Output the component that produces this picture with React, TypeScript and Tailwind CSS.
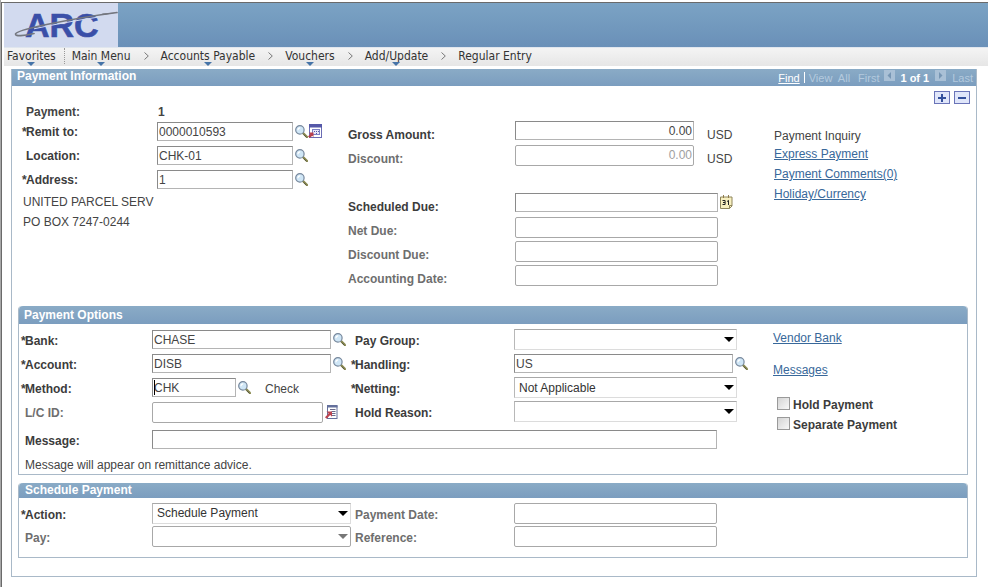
import type { ReactNode } from "react";

function Lens() {
  return (
    <svg width="13" height="13" viewBox="0 0 13 13" aria-hidden="true">
      <path d="M8 8L12 12" stroke="#8a8a50" strokeWidth="2.4" strokeLinecap="round" />
      <path d="M8.6 9.4L11.4 12.4" stroke="#4a4a3c" strokeWidth="0.8" />
      <circle cx="4.9" cy="4.9" r="4.2" fill="#cfe6f6" stroke="#76879c" strokeWidth="1.2" />
      <path d="M3 5.2A2.2 2.2 0 0 1 5.2 2.8" stroke="#fff" strokeWidth="1.2" fill="none" />
    </svg>
  );
}

function LookupButton({ label }: { label: string }) {
  return (
    <button type="button" aria-label={label} className="mb-0.5 ml-0.5 shrink-0">
      <Lens />
    </button>
  );
}

function DetailIcon() {
  return (
    <svg width="15" height="14" viewBox="0 0 15 14" aria-hidden="true">
      <rect x="1.500" y="0.5" width="12" height="13" fill="#fff" stroke="#6a6cb4" />
      <rect x="1" y="0" width="13" height="3.5" fill="#5558a8" />
      <rect x="4.5" y="5.5" width="7" height="5" fill="#e6e6f8" stroke="#7c80c4" />
      <path d="M6 7.5h1M8 7.5h1M10 7.5h1M8 9.5h1" stroke="#5558a8" />
      <path d="M1 8.5h4.500v4.500L4.200 11.700L1.800 14L0 12.400L2.300 9.900Z" fill="#b8404e" />
    </svg>
  );
}

function DocumentIcon() {
  return (
    <svg width="13" height="14" viewBox="0 0 13 14" aria-hidden="true">
      <rect x="2.5" y="0.5" width="9.5" height="13" fill="#fff" stroke="#64709c" />
      <path d="M2 1.5h10.5" stroke="#64709c" strokeWidth="2" />
      <path d="M5 4.5h5.5M6.5 6.5h4M7 8.5h3.5M7 10.5h3.5" stroke="#6c6c8c" />
      <path d="M1.5 6.5H7v5.3L5.2 10L1.6 13.8L0 12.3L3.6 8.5Z" fill="#bc4450" />
    </svg>
  );
}

function CalendarIcon() {
  return (
    <svg width="13" height="14" viewBox="0 0 13 14" aria-hidden="true">
      <path d="M0.5 2h11.5v9l-2.5 2.5h-9Z" fill="#f8f0c0" stroke="#8f865c" />
      <path d="M3.5 0v3M8.5 0v3" stroke="#8f7c4c" />
      <path d="M2.5 5.5h2.6v4H2.5M3 7.5h2M7 6.6L8.5 5.4V10" stroke="#222" fill="none" />
      <path d="M12 10.5H9.5v3" stroke="#8f865c" fill="none" />
    </svg>
  );
}

function Label({ id, required, muted, indent = true, className, children }: {
  id: string;
  required?: boolean;
  muted?: boolean;
  indent?: boolean;
  className: string;
  children: ReactNode;
}) {
  return (
    <label
      htmlFor={id}
      className={`flex shrink-0 font-bold leading-4 ${muted ? "text-[#6e6e6e]" : "text-[#3c3c3c]"} ${className}`}
    >
      {indent && <span className="w-1 shrink-0">{required ? "*" : ""}</span>}
      {children}
    </label>
  );
}

function TextField({ id, value = "", disabled, className }: {
  id: string;
  value?: string;
  disabled?: boolean;
  className: string;
}) {
  return (
    <input
      id={id}
      type="text"
      defaultValue={value}
      disabled={disabled}
      className={`shrink-0 border bg-white px-px text-[12px] leading-4 outline-none ${
        disabled
          ? "h-[21px] rounded-xs border-[#a8a8a8] text-[#a0a0a0]"
          : "mb-px h-[19px] border-[#b4b4b4] border-t-[#8a8a8a] border-l-[#8a8a8a] text-[#444]"
      } ${className}`}
    />
  );
}

function Dropdown({ id, value = "", disabled, className }: {
  id: string;
  value?: string;
  disabled?: boolean;
  className: string;
}) {
  return (
    <div className={`relative mb-px shrink-0 ${className}`}>
      <select
        id={id}
        disabled={disabled}
        className={`block h-[21px] w-full appearance-none border bg-white pl-1 text-[12px] leading-4 text-[#333] opacity-100 outline-none ${
          disabled ? "rounded-xs border-[#a8a8a8]" : "border-[#dcdcdc] border-t-[#a8a8a8] border-l-[#b8b8b8]"
        }`}
      >
        <option>{value}</option>
      </select>
      <svg
        width="10"
        height="5"
        viewBox="0 0 10 5"
        aria-hidden="true"
        className={`pointer-events-none absolute top-2 right-[3px] ${disabled ? "text-[#777]" : "text-black"}`}
      >
        <path d="M0 0h10L5 5Z" fill="currentColor" />
      </svg>
    </div>
  );
}

function Link({ children }: { children: ReactNode }) {
  return (
    <a href="#" className="text-[#38689a] underline">
      {children}
    </a>
  );
}

function Crumb({ children, menu = true }: { children: ReactNode; menu?: boolean }) {
  return (
    <a href="#" className="relative leading-4">
      {children}
      {menu && (
        <svg width="8" height="4" viewBox="0 0 8 4" aria-hidden="true" className="absolute top-[14px] left-1/2 -ml-1">
          <path d="M0 0h8L4 4Z" fill="#4674a8" />
        </svg>
      )}
    </a>
  );
}

function Chevron() {
  return (
    <svg width="5" height="8" viewBox="0 0 5 8" aria-hidden="true" className="mr-3 ml-[13px]">
      <path d="M0.5 0.5L4.3 4L0.5 7.5" fill="none" stroke="#777" />
    </svg>
  );
}

function Logo() {
  return (
    <svg width="114" height="44" viewBox="0 0 114 44" role="img" aria-label="ARC" className="block bg-[#d2daef]">
      <text
        x="21"
        y="34"
        fontFamily="Liberation Sans, Arial, sans-serif"
        fontWeight="700"
        fontSize="34"
        fill="#3a4fa8"
        stroke="#3a4fa8"
        strokeWidth="0.6"
      >
        ARC
      </text>
      <path d="M30 25.800C50 21.500 72 17.500 95 14" stroke="#d2daef" strokeWidth="1" fill="none" />
      <path
        d="M113 9.500C90 12.500 62 17.500 40 22C24 25.500 12 28.500 11.500 31C11 33.500 20 33 30 30.500"
        fill="none"
        stroke="#74777f"
        strokeWidth="1.7"
        strokeLinecap="round"
      />
      <path d="M98 10.500L113 9.500L100 12Z" fill="#74777f" />
    </svg>
  );
}

function PageArrow({ back }: { back?: boolean }) {
  return (
    <svg width="11" height="11" viewBox="0 0 11 11" aria-hidden="true">
      <rect width="11" height="11" fill="#a9c0d6" />
      <path d={back ? "M7 2v7L3.500 5.500Z" : "M4 2v7L7.500 5.500Z"} fill="#7796b4" />
    </svg>
  );
}

function RowButton({ minus }: { minus?: boolean }) {
  return (
    <button
      type="button"
      aria-label={minus ? "Delete row" : "Add row"}
      className="flex h-[13px] w-4 items-center justify-center border border-[#6a74b8] bg-[#e0e6fa]"
    >
      <svg width="8" height="8" viewBox="0 0 8 8" aria-hidden="true">
        <path d={minus ? "M0 4h8" : "M0 4h8M4 0v8"} stroke="#34509c" strokeWidth="2" />
      </svg>
    </button>
  );
}

function Check({ id, children }: { id: string; children: ReactNode }) {
  return (
    <div className="flex h-5 items-center">
      <input
        id={id}
        type="checkbox"
        className="mb-0.5 size-[13px] shrink-0 appearance-none border border-[#9a9a9a] bg-linear-to-br from-[#d4d4d4] to-[#f8f8f8]"
      />
      <label htmlFor={id} className="ml-[3px] pt-0.5 font-bold leading-4 text-[#3c3c3c]">
        {children}
      </label>
    </div>
  );
}

const BAR = "bg-linear-to-b from-[#8aabc6] to-[#7b9dbf] font-bold text-white";
const BOX = "border border-[#a9b9c8]";

function PaymentInformation() {
  return (
    <div className="flex">
      <div className="w-[336px] shrink-0 pl-[10px]">
        <div className="flex h-4 items-center font-bold">
          <span className="w-[136px] pl-1">Payment:</span>
          <span>1</span>
        </div>
        <div className="flex h-6 items-center">
          <Label id="remit" required className="w-[135px]">Remit to:</Label>
          <TextField id="remit" value="0000010593" className="w-[136px]" />
          <LookupButton label="Look up remit to" />
          <button type="button" aria-label="Remit details" className="mb-0.5">
            <DetailIcon />
          </button>
        </div>
        <div className="flex h-6 items-center">
          <Label id="location" className="w-[135px]">Location:</Label>
          <TextField id="location" value="CHK-01" className="w-[136px]" />
          <LookupButton label="Look up location" />
        </div>
        <div className="flex h-6 items-center">
          <Label id="address" required className="w-[135px]">Address:</Label>
          <TextField id="address" value="1" className="w-[136px]" />
          <LookupButton label="Look up address" />
        </div>
        <p className="pl-px leading-5">UNITED PARCEL SERV</p>
        <p className="pl-px leading-5">PO BOX 7247-0244</p>
      </div>

      <div className="w-[426px] shrink-0 pt-[15px]">
        <div className="flex h-6 items-center">
          <Label id="gross" indent={false} className="w-[167px] pt-2">Gross Amount:</Label>
          <TextField id="gross" value="0.00" className="w-[179px] text-right" />
          <span className="ml-[13px] pt-2 leading-4">USD</span>
        </div>
        <div className="flex h-6 items-center">
          <Label id="discount" muted indent={false} className="w-[167px] pt-2">Discount:</Label>
          <TextField id="discount" value="0.00" disabled className="w-[179px] text-right" />
          <span className="ml-[13px] pt-2 leading-4">USD</span>
        </div>
        <div className="mt-6 flex h-6 items-center">
          <Label id="scheduled" indent={false} className="w-[167px] pt-2">Scheduled Due:</Label>
          <TextField id="scheduled" className="w-[203px]" />
          <button type="button" aria-label="Choose a date" className="mb-0.5 ml-0.5">
            <CalendarIcon />
          </button>
        </div>
        <div className="flex h-6 items-center">
          <Label id="net" muted indent={false} className="w-[167px] pt-2">Net Due:</Label>
          <TextField id="net" disabled className="w-[203px]" />
        </div>
        <div className="flex h-6 items-center">
          <Label id="discount-due" muted indent={false} className="w-[167px] pt-2">Discount Due:</Label>
          <TextField id="discount-due" disabled className="w-[203px]" />
        </div>
        <div className="flex h-6 items-center">
          <Label id="accounting" muted indent={false} className="w-[167px] pt-2">Accounting Date:</Label>
          <TextField id="accounting" disabled className="w-[203px]" />
        </div>
      </div>

      <div className="flex flex-col items-start pt-6 leading-5">
        <span className="leading-4">Payment Inquiry</span>
        <Link>Express Payment</Link>
        <Link>Payment Comments(0)</Link>
        <Link>Holiday/Currency</Link>
      </div>
    </div>
  );
}

function PaymentOptions() {
  return (
    <section className={`mt-[19px] ${BOX} rounded-t-sm border-t-0`}>
      <h2 className={`h-[18px] rounded-t-sm pl-[5px] leading-[18px] ${BAR}`}>Payment Options</h2>
      <div className="flex pt-1">
        <div className="w-[754px] shrink-0 pl-0.5">
          <div className="flex">
            <div className="w-[330px] shrink-0">
              <div className="flex h-6 items-center">
                <Label id="bank" required className="w-[131px] pt-0.5">Bank:</Label>
                <TextField id="bank" value="CHASE" className="w-[179px]" />
                <LookupButton label="Look up bank" />
              </div>
              <div className="flex h-6 items-center">
                <Label id="account" required className="w-[131px] pt-0.5">Account:</Label>
                <TextField id="account" value="DISB" className="w-[179px]" />
                <LookupButton label="Look up account" />
              </div>
              <div className="flex h-6 items-center">
                <Label id="method" required className="w-[131px] pt-0.5">Method:</Label>
                <div className="relative flex">
                  <TextField id="method" value="CHK" className="w-[84px]" />
                  <span className="absolute top-0.5 left-0.5 h-[15px] w-px bg-black" />
                </div>
                <LookupButton label="Look up method" />
                <span className="ml-[14px] pt-0.5 leading-4">Check</span>
              </div>
              <div className="flex h-6 items-center">
                <Label id="lc" muted className="w-[131px] pt-0.5">L/C ID:</Label>
                <TextField id="lc" disabled className="w-[171px]" />
                <button type="button" aria-label="Letter of credit" className="ml-0.5">
                  <DocumentIcon />
                </button>
              </div>
            </div>
            <div>
              <div className="flex h-6 items-center">
                <Label id="group" className="w-[163px] pt-0.5">Pay Group:</Label>
                <Dropdown id="group" className="w-[223px]" />
              </div>
              <div className="flex h-6 items-center">
                <Label id="handling" required className="w-[163px] pt-0.5">Handling:</Label>
                <TextField id="handling" value="US" className="w-[219px]" />
                <LookupButton label="Look up handling" />
              </div>
              <div className="flex h-6 items-center">
                <Label id="netting" required className="w-[163px] pt-0.5">Netting:</Label>
                <Dropdown id="netting" value="Not Applicable" className="w-[223px]" />
              </div>
              <div className="flex h-6 items-center">
                <Label id="hold-reason" className="w-[163px] pt-0.5">Hold Reason:</Label>
                <Dropdown id="hold-reason" className="w-[223px]" />
              </div>
            </div>
          </div>
          <div className="mt-1 flex h-6 items-center">
            <Label id="message" className="w-[131px] pt-0.5">Message:</Label>
            <TextField id="message" className="w-[565px]" />
          </div>
          <p className="mt-1 pl-1 leading-[18px]">Message will appear on remittance advice.</p>
        </div>
        <div className="flex flex-col items-start leading-5">
          <Link>Vendor Bank</Link>
          <div className="mt-3">
            <Link>Messages</Link>
          </div>
          <div className="mt-[14px] pl-1">
            <Check id="hold">Hold Payment</Check>
            <Check id="separate">Separate Payment</Check>
          </div>
        </div>
      </div>
    </section>
  );
}

function SchedulePayment() {
  return (
    <section className={`mt-2 ${BOX} rounded-t-sm border-t-0`}>
      <h2 className={`h-[15px] rounded-t-sm pl-1.5 leading-[15px] ${BAR}`}>Schedule Payment</h2>
      <div className="flex pt-1 pb-[9px] pl-0.5">
        <div className="w-[330px] shrink-0">
          <div className="flex h-[23px] items-center">
            <Label id="action" required className="w-[131px] pt-0.5">Action:</Label>
            <Dropdown id="action" value="Schedule Payment" className="w-[199px]" />
          </div>
          <div className="flex h-[23px] items-center">
            <Label id="pay" muted className="w-[131px] pt-0.5">Pay:</Label>
            <Dropdown id="pay" disabled className="w-[199px]" />
          </div>
        </div>
        <div>
          <div className="flex h-[23px] items-center">
            <Label id="pay-date" muted className="w-[163px] pt-0.5">Payment Date:</Label>
            <TextField id="pay-date" disabled className="w-[203px]" />
          </div>
          <div className="flex h-[23px] items-center">
            <Label id="reference" muted className="w-[163px] pt-0.5">Reference:</Label>
            <TextField id="reference" disabled className="w-[203px]" />
          </div>
        </div>
      </div>
    </section>
  );
}

export default function App() {
  return (
    <div className="min-h-screen border-l border-[#a8a8a8] bg-white pt-0.5 font-['Liberation_Sans',Arial,sans-serif] text-[12px] text-[#444]">
      <div className="min-h-[585px] border-t border-l border-[#6a6a6a] pl-0.5">
        <header className="bg-linear-to-b from-[#7ba3c4] to-[#6a90b8]">
          <Logo />
        </header>
        <nav
          aria-label="Breadcrumb"
          className="flex h-[19px] items-center border-t border-[#e0e6ee] bg-linear-to-b from-[#f4f4f4] to-[#e6e6e6] pb-0.5 pl-[3px] font-['DejaVu_Sans_Condensed','DejaVu_Sans',sans-serif] text-[12px] text-[#333]"
        >
          <Crumb>Favorites</Crumb>
          <span className="mr-[7px] ml-2 h-4 border-l border-dotted border-[#999]" />
          <Crumb>Main Menu</Crumb>
          <Chevron />
          <Crumb>Accounts Payable</Crumb>
          <Chevron />
          <Crumb>Vouchers</Crumb>
          <Chevron />
          <Crumb>Add/Update</Crumb>
          <Chevron />
          <Crumb menu={false}>Regular Entry</Crumb>
        </nav>

        <main className={`mt-[3px] mr-[11px] ml-[7px] ${BOX} border-t-0`}>
          <div className={`flex h-[17px] items-center justify-between pr-[3px] pl-[5px] ${BAR}`}>
            <h1 className="pb-[3px] leading-[14px]">Payment Information</h1>
            <div className="flex items-center text-[11px] leading-[15px] font-normal text-[#b4cade]">
              <a href="#" className="pt-0.5 text-white underline">Find</a>
              <span className="mx-1 h-[11px] w-px bg-white" />
              <span className="pt-0.5">View&nbsp; All</span>
              <span className="ml-2 pt-0.5">First</span>
              <span className="mx-[5px] pb-1"><PageArrow back /></span>
              <span className="pt-0.5 font-bold text-white">1 of 1</span>
              <span className="mx-1.5 pb-1"><PageArrow /></span>
              <span className="pt-0.5">Last</span>
            </div>
          </div>
          <div className="flex justify-end gap-1 pt-[5px] pr-1.5">
            <RowButton />
            <RowButton minus />
          </div>
          <PaymentInformation />
          <div className="mr-2 mb-[18px] ml-1.5">
            <PaymentOptions />
            <SchedulePayment />
          </div>
        </main>
      </div>
    </div>
  );
}
